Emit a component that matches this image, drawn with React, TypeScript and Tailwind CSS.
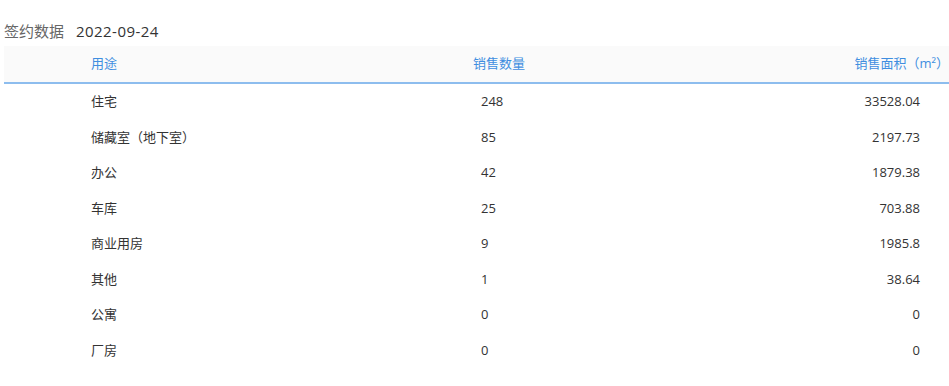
import React from "react";

const rows: [string, string, string][] = [
  ["住宅", "248", "33528.04"],
  ["储藏室（地下室）", "85", "2197.73"],
  ["办公", "42", "1879.38"],
  ["车库", "25", "703.88"],
  ["商业用房", "9", "1985.8"],
  ["其他", "1", "38.64"],
  ["公寓", "0", "0"],
  ["厂房", "0", "0"],
];

export default function App() {
  return (
    <div
      className="w-[949px] h-[386px] bg-white overflow-hidden"
      style={{ fontFamily: '"Open Sans", "Noto Sans CJK SC", sans-serif' }}
    >
      <div className="pt-[21px] pl-[4px] h-[46px] flex items-start text-[15px] leading-[20px]">
        <span className="text-[#666]">签约数据</span>
        <span className="ml-[12px] text-[#333] tracking-[0.45px]">2022-09-24</span>
      </div>
      <div className="ml-[4px] w-[945px]">
        <div className="grid grid-cols-[469px_1fr_300px] h-[38px] bg-[#fafafa] border-b-2 border-[#8dbdee] text-[13px] text-[#3f8ee0] items-center">
          <div className="pl-[87px]">用途</div>
          <div>销售数量</div>
          <div className="text-right pr-[0px]">销售面积（m²）</div>
        </div>
        {rows.map((r) => (
          <div
            key={r[0]}
            className="grid grid-cols-[477px_1fr_300px] h-[35.5px] text-[13px] text-[#333] items-center"
          >
            <div className="pl-[87px]">{r[0]}</div>
            <div>{r[1]}</div>
            <div className="text-right pr-[29px]">{r[2]}</div>
          </div>
        ))}
      </div>
    </div>
  );
}
